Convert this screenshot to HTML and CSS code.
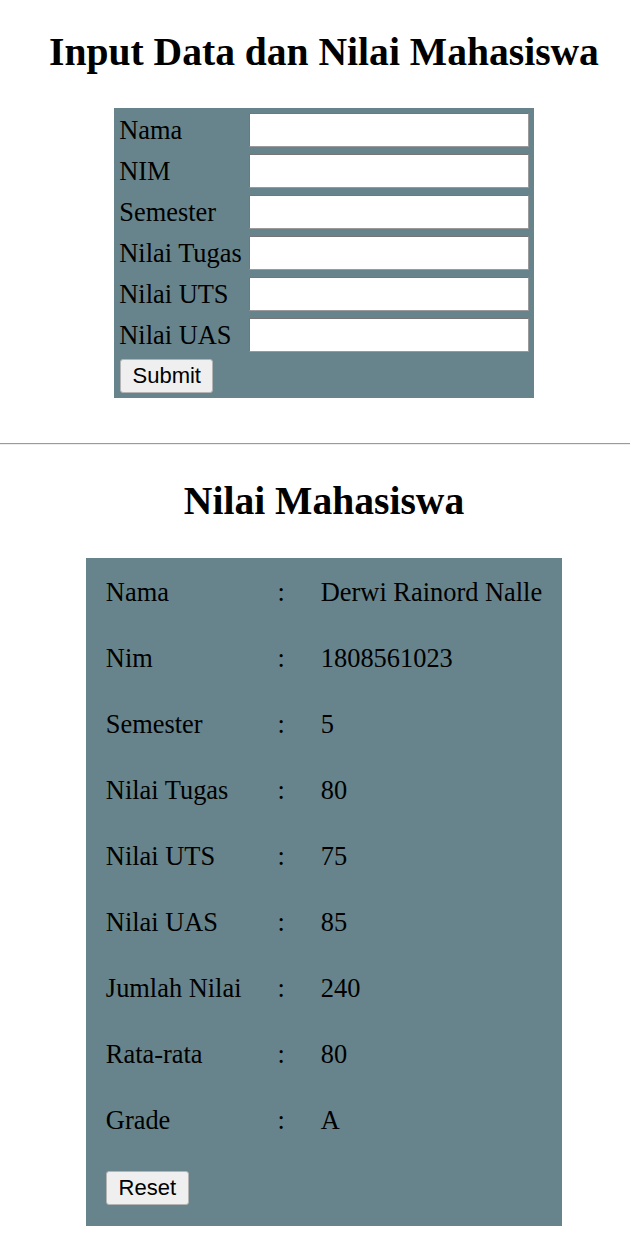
FILE: index.html
```html
<!DOCTYPE html>
<html lang="id">
<head>
<meta charset="utf-8">
<title>Input Data dan Nilai Mahasiswa</title>
<link rel="stylesheet" href="styles.css">
</head>
<body>
<section class="block block-input">
  <h2 class="title">Input Data dan Nilai Mahasiswa</h2>
  <form class="form">
    <table class="form-table">
      <tr><td class="lbl">Nama</td><td><input class="field" type="text"></td></tr>
      <tr><td class="lbl">NIM</td><td><input class="field" type="text"></td></tr>
      <tr><td class="lbl">Semester</td><td><input class="field" type="text"></td></tr>
      <tr><td class="lbl">Nilai Tugas</td><td><input class="field" type="text"></td></tr>
      <tr><td class="lbl">Nilai UTS</td><td><input class="field" type="text"></td></tr>
      <tr><td class="lbl">Nilai UAS</td><td><input class="field" type="text"></td></tr>
      <tr><td colspan="2"><button class="btn" type="button">Submit</button></td></tr>
    </table>
  </form>
</section>
<hr class="divider">
<section class="block block-result">
  <h2 class="title title-result">Nilai Mahasiswa</h2>
  <table class="result-table">
    <tr><td>Nama</td><td>:</td><td>Derwi Rainord Nalle</td></tr>
    <tr><td>Nim</td><td>:</td><td>1808561023</td></tr>
    <tr><td>Semester</td><td>:</td><td>5</td></tr>
    <tr><td>Nilai Tugas</td><td>:</td><td>80</td></tr>
    <tr><td>Nilai UTS</td><td>:</td><td>75</td></tr>
    <tr><td>Nilai UAS</td><td>:</td><td>85</td></tr>
    <tr><td>Jumlah Nilai</td><td>:</td><td>240</td></tr>
    <tr><td>Rata-rata</td><td>:</td><td>80</td></tr>
    <tr><td>Grade</td><td>:</td><td>A</td></tr>
    <tr><td colspan="3" class="btn-cell"><button class="btn btn-reset" type="button">Reset</button></td></tr>
  </table>
</section>
</body>
</html>
```
FILE: styles.css
```css
html, body {
  margin: 0;
  padding: 0;
  background: #ffffff;
}
body {
  font-family: "Liberation Serif", "Times New Roman", serif;
  color: #000;
  overflow-x: hidden;
}
.block {
  padding-left: 18px;
}
.block-input {
  padding-top: 30px;
  padding-bottom: 45px;
}
.title {
  margin: 0;
  font-size: 39.6px;
  line-height: 45px;
  font-weight: bold;
  text-align: center;
}
.block-input .title {
  margin-bottom: 33px;
}
.form {
  margin: 0;
}
.form-table {
  margin: 0 auto;
  background: #67848c;
  border-spacing: 3px;
  font-size: 26.4px;
}
.form-table td {
  padding: 2px;
  line-height: 30px;
  vertical-align: middle;
}
.lbl {
  white-space: nowrap;
}
.field {
  display: block;
  box-sizing: border-box;
  width: 280px;
  height: 34px;
  margin: 0;
  padding: 0 3px;
  background: #fff;
  border: 1.5px solid #767676;
  border-bottom-color: #9a9a9a;
  border-right-color: #9a9a9a;
  border-radius: 1px;
  font-size: 22px;
}
.btn {
  display: block;
  box-sizing: border-box;
  height: 34px;
  padding: 0 11px;
  margin: 0;
  background: #efefef;
  border: 1.5px solid #b4b4b4;
  border-radius: 3px;
  font-family: "Liberation Sans", Arial, sans-serif;
  font-size: 22px;
  line-height: 30px;
  color: #000;
}
.form-table .btn {
  width: 93px;
  margin-left: 1px;
}
.divider {
  margin: 0;
  height: 0;
  border: 0;
  border-top: 1px solid #9a9a9a;
  border-bottom: 1px solid #eeeeee;
}
.block-result {
  padding-top: 34px;
  padding-bottom: 13px;
}
.title-result {
  margin-bottom: 34px;
}
.result-table {
  margin: 0 auto;
  background: #67848c;
  border-spacing: 3px;
  font-size: 26.4px;
}
.result-table td {
  padding: 16px 16.5px;
  line-height: 31px;
  white-space: nowrap;
  vertical-align: middle;
}
.result-table .btn-cell {
  padding-top: 16px;
  padding-bottom: 18px;
}
.btn-reset {
  width: 83px;
  padding: 0;
}
```
